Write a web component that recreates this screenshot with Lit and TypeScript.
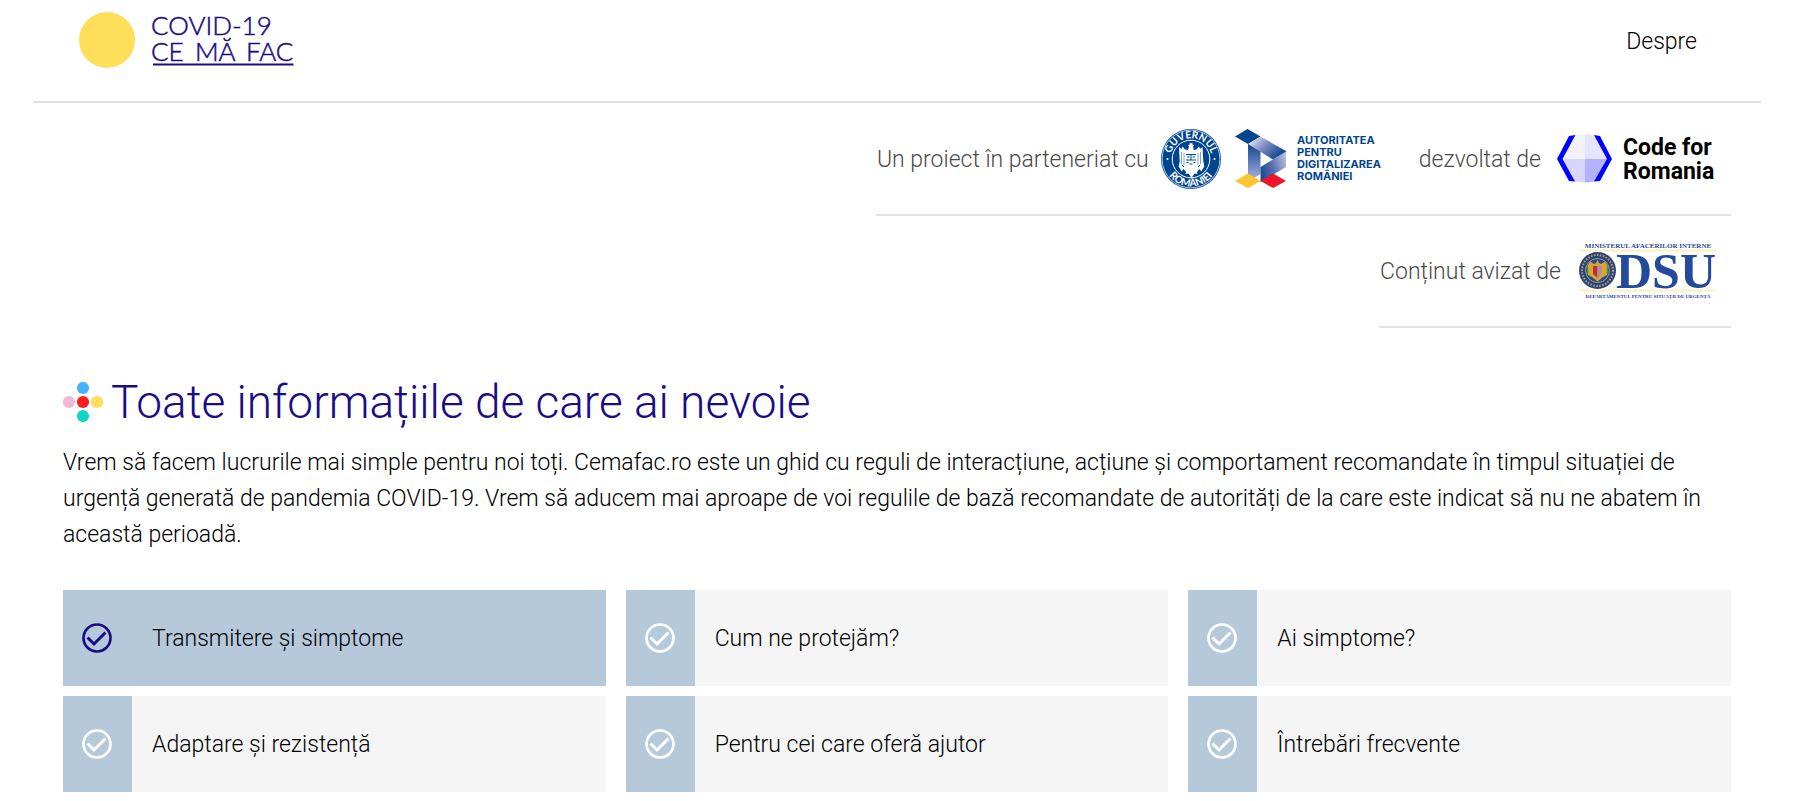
import { LitElement, html, css, svg } from "lit";
import { customElement, state } from "lit/decorators.js";
import { classMap } from "lit/directives/class-map.js";

const topics = [
  "Transmitere și simptome",
  "Cum ne protejăm?",
  "Ai simptome?",
  "Adaptare și rezistență",
  "Pentru cei care oferă ajutor",
  "Întrebări frecvente",
];

const siteLogo = html`
  <svg class="logo" width="216" height="60" viewBox="0 0 216 60" role="img" aria-label="COVID-19 Ce mă fac">
    <circle cx="28" cy="30" r="28" fill="#ffde5a" />
    <g font-family="Lato, sans-serif" font-weight="300" font-size="26" fill="#1b0c85" stroke="#1b0c85" stroke-width="0.5">
      <text x="72" y="25">COVID-19</text>
      <text y="51"><tspan x="72">CE</tspan> <tspan x="116">MĂ</tspan> <tspan x="167">FAC</tspan></text>
    </g>
    <path d="M74 54.500H214.500" stroke="#1b0c85" stroke-width="2" />
  </svg>`;

const governmentLogo = html`
  <svg class="seal" width="60" height="60" viewBox="0 0 60 60" role="img" aria-label="Guvernul României">
    <defs>
      <path id="arc-top" d="M9.200 30A20.800 20.800 0 0 1 50.800 30" />
      <path id="arc-bottom" d="M2.600 30A27.400 27.400 0 0 0 57.400 30" />
    </defs>
    <circle cx="30" cy="30" r="30" fill="#00458f" />
    <circle cx="30" cy="30" r="28.900" fill="none" stroke="#fff" stroke-width="0.700" />
    <circle cx="30" cy="30" r="18.800" fill="none" stroke="#fff" stroke-width="1" />
    <g font-family="Lato, sans-serif" font-weight="700" font-size="10" fill="#fff" text-anchor="middle">
      <text><textPath href="#arc-top" startOffset="50%">GUVERNUL</textPath></text>
      <text><textPath href="#arc-bottom" startOffset="50%">ROMÂNIEI</textPath></text>
    </g>
    <circle cx="6.500" cy="30" r="1" fill="#fff" />
    <circle cx="53.500" cy="30" r="1" fill="#fff" />
    <path fill="#fff" d="M28 17.500 27 16l2-.500-.600-2 1.600 1 1.600-1-.400 2 1.800.500-.800 1.500.300 3.500 3-.500 2.500-3 1 2.500 2.500-2 .800 14.500 1 5-3 5-1.800-2.500-2.500 3 .500 2-3-.500-3 4.500-3-4.500-3 .500.500-2-2.500-3-1.800 2.500-3-5 1-5L18 18l2.500 2 1-2.500 2.500 3 3 .500z" />
    <path fill="none" stroke="#00458f" stroke-width="1" d="M25 25.500h10M25 31h10M30 25.500v5.500M26 28h2.500M31.500 28h2.500M25.500 33.500h2M32.500 33.500h2M28.500 35h3M21 36l2 2M39 36l-2 2" />
    <path fill="none" stroke="#00458f" stroke-width="0.500" d="M20.500 23v12M39.500 23v12M23 24v12M37 24v12" />
  </svg>`;

const digitalLogo = html`
  <svg width="148" height="60" viewBox="0 0 148 60" role="img" aria-label="Autoritatea pentru Digitalizarea României">
    <defs>
      <linearGradient id="stem" x1="0" y1="0" x2="0" y2="1">
        <stop offset="0" stop-color="#0b4492" /><stop offset="1" stop-color="#b6b9db" />
      </linearGradient>
      <linearGradient id="fold" x1="0" y1="0" x2="1" y2="0.600">
        <stop offset="0" stop-color="#fff" /><stop offset="0.450" stop-color="#8a93c4" /><stop offset="1" stop-color="#0b4492" />
      </linearGradient>
      <linearGradient id="foot" x1="0" y1="0.600" x2="1" y2="0.200">
        <stop offset="0" stop-color="#1e4d99" /><stop offset="0.450" stop-color="#5c70ae" /><stop offset="1" stop-color="#b9bede" />
      </linearGradient>
    </defs>
    <path d="M13 14.500 25.500 22V45L13 53z" fill="url(#stem)" />
    <path d="M0 7.500 12.500 0 25.500 7.500 13 15z" fill="#00458f" />
    <path d="M13 15 25.500 7.500 51 22V23L38 30.500z" fill="url(#fold)" />
    <path d="M25.500 38 51 22.500V38L25.500 53z" fill="url(#foot)" />
    <path d="M0 52 13 44.500 25.500 52 13 59z" fill="#ffc52e" />
    <path d="M25.500 52 38 44.500 51 52 38 59z" fill="#ee1429" />
    <g font-family="Inter, sans-serif" font-weight="700" font-size="11" fill="#00458f">
      <text x="62" y="15">AUTORITATEA</text>
      <text x="62" y="27">PENTRU</text>
      <text x="62" y="39">DIGITALIZAREA</text>
      <text x="62" y="51">ROMÂNIEI</text>
    </g>
  </svg>`;

const codeLogo = html`
  <svg width="160" height="50" viewBox="0 0 160 50" role="img" aria-label="Code for Romania">
    <path d="M18 1.500Q28-.500 38 1.500L51 25H28z" fill="#e5e5ff" />
    <path d="M18 1.500Q23 .200 28 .200V25H5z" fill="#f1f1ff" />
    <path d="M5 25H28V48.500Q22 48.500 18 47.500z" fill="#d6d6ff" />
    <path d="M28 25H51L38 47.500Q33 48.500 28 48.500z" fill="#b2b2ff" />
    <path d="M12 2 18.500 1 5.500 25 18 47.500 12 47 0 25zM43 2 37 1 50 25 37 47.500 43 47 55 25z" fill="#00f" />
    <g font-family="Roboto, sans-serif" font-weight="700" font-size="23" fill="#000">
      <text x="66" y="21">Code for</text>
      <text x="66" y="45">Romania</text>
    </g>
  </svg>`;

const emergencyLogo = html`
  <svg width="138" height="58" viewBox="0 0 138 58" role="img" aria-label="Departamentul pentru Situații de Urgență">
    <path d="M0 8.500H137M0 48.500H137" stroke="#fdf0b8" stroke-width="2" />
    <circle cx="18.500" cy="28.500" r="18.500" fill="#2a4480" />
    <circle cx="18.500" cy="28.500" r="15.500" fill="none" stroke="#b5a55c" stroke-width="2" stroke-dasharray="1.500 1.500" />
    <circle cx="18.500" cy="28.500" r="12" fill="#264a9b" stroke="#c6b25a" stroke-width="0.800" />
    <path d="M17 21 18.500 18 20 21 22 22 26 19.500 28.500 24 28 33 24 35 18.500 39.500 13 35 9 33 8.500 24 11 19.500 15 22z" fill="#d9a62c" />
    <path d="M14 24h4.500v12l-4.500-4z" fill="#b8343b" />
    <path d="M18.500 24H23v8l-4.500 4z" fill="#b98aa0" />
    <path d="M8.500 25v7M28.500 25v7" stroke="#3c9653" stroke-width="1.500" />
    <g font-family="'Liberation Serif', serif" font-weight="700" fill="#234a9c" text-anchor="middle">
      <text x="69" y="6" font-size="7">MINISTERUL AFACERILOR INTERNE</text>
      <text x="87" y="46" font-size="50">DSU</text>
      <text x="69" y="56" font-size="5">DEPARTAMENTUL PENTRU SITUAȚII DE URGENȚĂ</text>
    </g>
  </svg>`;

const dots = [
  [20, 6, "#40b4ff"],
  [6, 20, "#f3b9d4"],
  [20, 20, "#ff1d1d"],
  [34, 20, "#ffde5a"],
  [20, 34, "#0fd6c8"],
];

@customElement("app-root")
export class AppRoot extends LitElement {
  @state() private active = 0;

  static styles = css`
    :host {
      display: block;
      box-sizing: border-box;
      padding: 0 58px 8px 33px;
      background: #fff;
      color: #000;
      font-family: Roboto, sans-serif;
      font-weight: 300;
      font-size: 23px;
      line-height: 36px;
    }
    svg { display: block; flex: none; }
    a { color: inherit; text-decoration: none; }
    .header {
      display: flex;
      justify-content: space-between;
      padding: 10px 64px 31px 46px;
      border-bottom: 2px solid #e0e0e0;
    }
    .nav { padding-top: 14px; }
    .content { padding: 1px 30px 0; }
    .partners {
      display: flex;
      flex-direction: column;
      align-items: flex-end;
      color: #4a4a4a;
    }
    .strip {
      display: flex;
      align-items: center;
      box-sizing: border-box;
      height: 112px;
      padding: 0 14px 0 1px;
      gap: 18px;
      border-bottom: 2px solid #e3e3e3;
    }
    .strip span { padding-top: 2px; }
    .group { display: flex; align-items: center; gap: 12px; }
    .group + .group { margin-left: 18px; gap: 16px; }
    .seal { margin-right: 2px; }
    .title {
      display: flex;
      align-items: center;
      gap: 8px;
      margin: 44px 0 13px;
      color: #1b0c85;
      font-size: 46px;
      font-weight: 300;
      line-height: 60px;
    }
    .intro { margin: 0; }
    .topics {
      display: grid;
      grid-template-columns: repeat(3, 1fr);
      gap: 10px 20px;
      margin-top: 37px;
    }
    .topic {
      display: flex;
      align-items: stretch;
      min-height: 96px;
      padding: 0;
      border: 0;
      background: #f5f5f5;
      color: #000;
      font: inherit;
      text-align: left;
      cursor: pointer;
    }
    .mark {
      display: flex;
      align-items: center;
      padding: 0 20px 0 19px;
      background: #b6c9db;
      color: #fff;
    }
    .label { align-self: center; padding: 2px 20px 0; }
    .active { background: #b6c9db; }
    .active .mark { color: #1b0c85; }
  `;

  render() {
    return html`
      <header class="header">
        <a href="#">${siteLogo}</a>
        <nav class="nav"><a href="#despre">Despre</a></nav>
      </header>
      <main class="content">
        <section class="partners">
          <div class="strip">
            <div class="group"><span>Un proiect în parteneriat cu</span>${governmentLogo}${digitalLogo}</div>
            <div class="group"><span>dezvoltat de</span>${codeLogo}</div>
          </div>
          <div class="strip"><span>Conținut avizat de</span>${emergencyLogo}</div>
        </section>
        <h1 class="title">
          <svg width="40" height="40" viewBox="0 0 40 40" aria-hidden="true">
            ${dots.map(([x, y, fill]) => svg`<circle cx=${x} cy=${y} r="6.100" fill=${fill} />`)}
          </svg>
          <span>Toate informațiile de care ai nevoie</span>
        </h1>
        <p class="intro">
          Vrem să facem lucrurile mai simple pentru noi toți. Cemafac.ro este un ghid cu reguli de
          interacțiune, acțiune și comportament recomandate în timpul situației de urgență generată de
          pandemia COVID-19. Vrem să aducem mai aproape de voi regulile de bază recomandate de
          autorități de la care este indicat să nu ne abatem în această perioadă.
        </p>
        <div class="topics">
          ${topics.map(
            (topic, i) => html`
              <button
                class=${classMap({ topic: true, active: i === this.active })}
                @click=${() => (this.active = i)}
              >
                <span class="mark">
                  <svg width="30" height="30" viewBox="0 0 30 30" fill="none" stroke="currentColor" aria-hidden="true">
                    <circle cx="15" cy="15" r="13.500" stroke-width="2.700" />
                    <path d="M5.500 14.500 12 21 23.500 9.500" stroke-width="3" />
                  </svg>
                </span>
                <span class="label">${topic}</span>
              </button>`
          )}
        </div>
      </main>
    `;
  }
}
